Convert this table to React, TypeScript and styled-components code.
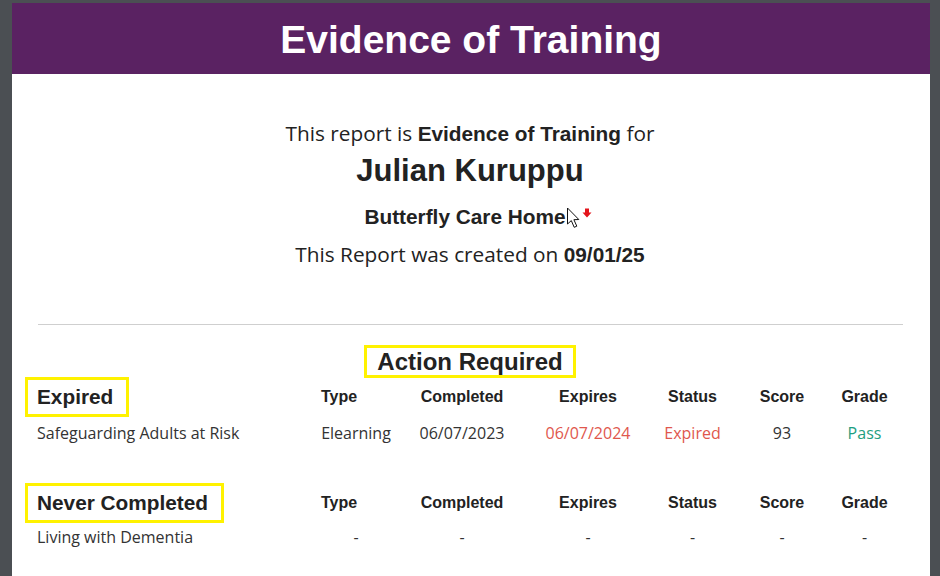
import React from "react";
import styled, { createGlobalStyle } from "styled-components";

const Global = createGlobalStyle`
  html, body { margin: 0; padding: 0; background: #4b4f53; }
  body { width: 940px; height: 576px; overflow: hidden; }
  * { box-sizing: border-box; }
`;

const Page = styled.div`
  margin: 3px 10px 0 12px;
  width: 918px;
  height: 573px;
  background: #ffffff;
  overflow: hidden;
`;

const Banner = styled.header`
  height: 71px;
  background: #5a2262;
  display: flex;
  align-items: center;
  justify-content: center;
`;

const BannerTitle = styled.h1`
  margin: 0;
  color: #ffffff;
  font-family: "Liberation Sans", Arial, sans-serif;
  font-weight: 700;
  font-size: 39px;
  line-height: 44px;
  padding-top: 2px;
`;

const Body = styled.main`
  padding: 0 27px 0 25px;
`;

const Intro = styled.section`
  display: flex;
  flex-direction: column;
  align-items: center;
  padding-top: 45px;
  color: #222;
`;

const IntroLine = styled.p<{ $top?: number }>`
  margin: ${(p) => p.$top ?? 0}px 0 0;
  font-family: "Open Sans", sans-serif;
  font-size: 20.8px;
  line-height: 28px;
  color: #222;
  b {
    font-family: "Liberation Sans", Arial, sans-serif;
    font-weight: 700;
  }
`;

const Person = styled.h2`
  margin: 5px 0 0;
  font-family: "Liberation Sans", Arial, sans-serif;
  font-weight: 700;
  font-size: 31px;
  line-height: 36px;
  color: #222;
`;

const Org = styled.h3`
  display: flex;
  align-items: center;
  margin: 14px 0 0;
  font-family: "Liberation Sans", Arial, sans-serif;
  font-weight: 700;
  font-size: 20.8px;
  line-height: 28px;
  color: #222;
`;

const Marker = styled.span`
  position: relative;
  display: inline-block;
  width: 10px;
  height: 28px;
`;

const PointerIcon = styled.svg`
  position: absolute;
  left: 0px;
  top: 4px;
`;

const ArrowIcon = styled.svg`
  position: absolute;
  left: 16px;
  top: 5px;
`;

const Rule = styled.hr`
  margin: 55px 0 0 1px;
  border: 0;
  border-top: 1px solid #cfcfcf;
  height: 0;
`;

const SectionHead = styled.div`
  display: flex;
  justify-content: center;
  margin-top: 20px;
`;

const Highlight = styled.span<{ $size: number }>`
  display: inline-block;
  border: 3px solid #fff200;
  font-family: "Liberation Sans", Arial, sans-serif;
  font-weight: 700;
  font-size: ${(p) => p.$size}px;
  color: #222;
`;

const ActionBox = styled(Highlight)`
  padding: 0 10px;
  line-height: 27px;
`;

const Table = styled.div<{ $top: number }>`
  display: grid;
  grid-template-columns: 274px 90px 122px 130px 79px 100px 65px;
  margin-top: ${(p) => p.$top}px;
`;

const HeadCell = styled.div<{ $left?: boolean }>`
  height: 40px;
  display: flex;
  align-items: center;
  justify-content: ${(p) => (p.$left ? "flex-start" : "center")};
  padding-left: ${(p) => (p.$left ? "10px" : "0")};
  font-family: "Liberation Sans", Arial, sans-serif;
  font-weight: 700;
  font-size: 16px;
  color: #222;
`;

const GroupCell = styled.div`
  height: 40px;
  display: flex;
  align-items: center;
`;

const GroupBox = styled(Highlight)`
  margin-left: -12px;
  padding: 0 13px 0 9px;
  line-height: 34px;
`;

const Cell = styled.div<{ $tone?: "red" | "green"; $left?: boolean; $h: number }>`
  height: ${(p) => p.$h}px;
  display: flex;
  align-items: center;
  justify-content: ${(p) => (p.$left ? "flex-start" : "center")};
  font-family: "Open Sans", sans-serif;
  font-size: 16px;
  color: ${(p) => (p.$tone === "red" ? "#e0574d" : p.$tone === "green" ? "#1e9e80" : "#333")};
`;

const columns = ["Type", "Completed", "Expires", "Status", "Score", "Grade"];

type Row = { name: string; cells: { v: string; tone?: "red" | "green" }[] };

function Group({ title, rows, top, rowH }: { title: string; rows: Row[]; top: number; rowH: number }) {
  return (
    <Table $top={top}>
      <GroupCell>
        <GroupBox $size={20.8}>{title}</GroupBox>
      </GroupCell>
      {columns.map((c, i) => (
        <HeadCell key={c} $left={i === 0}>
          {c}
        </HeadCell>
      ))}
      {rows.map((r) => (
        <React.Fragment key={r.name}>
          <Cell $left $h={rowH}>
            {r.name}
          </Cell>
          {r.cells.map((c, i) => (
            <Cell key={i} $tone={c.tone} $h={rowH}>
              {c.v}
            </Cell>
          ))}
        </React.Fragment>
      ))}
    </Table>
  );
}

export default function App() {
  return (
    <>
      <Global />
      <Page>
        <Banner>
          <BannerTitle>Evidence of Training</BannerTitle>
        </Banner>
        <Body>
          <Intro>
            <IntroLine>
              This report is <b>Evidence of Training</b> for
            </IntroLine>
            <Person>Julian Kuruppu</Person>
            <Org>
              Butterfly Care Home
              <Marker>
                <ArrowIcon width="10" height="11" viewBox="0 0 10 11">
                  <path d="M3 0.5 H7 V4.5 H9.5 L5 9.5 L0.5 4.5 H3 Z" fill="#e3141b" />
                </ArrowIcon>
                <PointerIcon width="16" height="22" viewBox="0 0 16 22">
                  <path
                    d="M1.5 1 L1.5 17 L5.3 13.6 L8.2 20.3 L10.8 19.2 L7.9 12.7 L12.8 12.5 Z"
                    fill="#ffffff"
                    stroke="#111"
                    strokeWidth="1"
                    strokeLinejoin="round"
                  />
                </PointerIcon>
              </Marker>
            </Org>
            <IntroLine $top={9}>
              This Report was created on <b>09/01/25</b>
            </IntroLine>
          </Intro>
          <Rule />
          <SectionHead>
            <ActionBox $size={24}>Action Required</ActionBox>
          </SectionHead>
          <Group
            top={-1}
            rowH={31}
            title="Expired"
            rows={[
              {
                name: "Safeguarding Adults at Risk",
                cells: [
                  { v: "Elearning" },
                  { v: "06/07/2023" },
                  { v: "06/07/2024", tone: "red" },
                  { v: "Expired", tone: "red" },
                  { v: "93" },
                  { v: "Pass", tone: "green" },
                ],
              },
            ]}
          />
          <Group
            top={35}
            rowH={27}
            title="Never Completed"
            rows={[
              {
                name: "Living with Dementia",
                cells: [{ v: "-" }, { v: "-" }, { v: "-" }, { v: "-" }, { v: "-" }, { v: "-" }],
              },
            ]}
          />
        </Body>
      </Page>
    </>
  );
}
